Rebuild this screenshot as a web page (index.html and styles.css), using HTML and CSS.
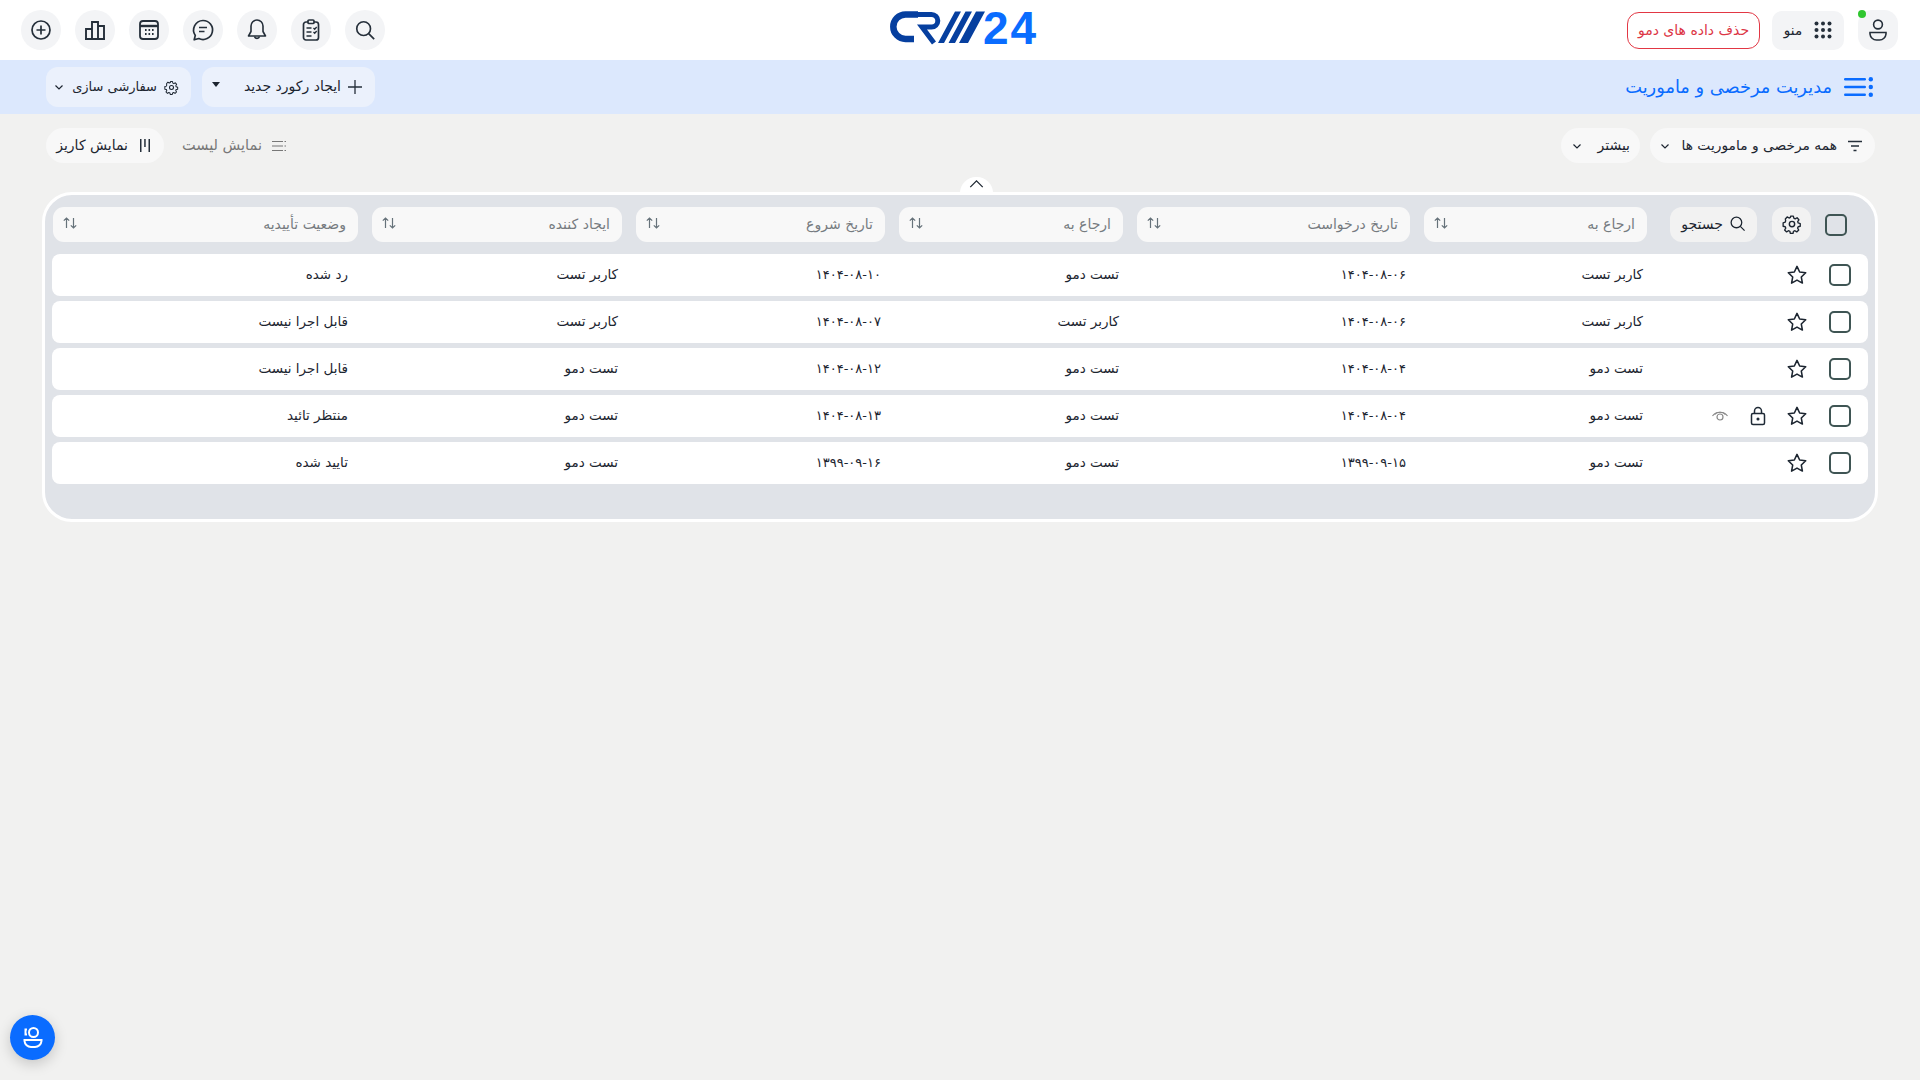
FILE: index.html
```html
<!DOCTYPE html>
<html lang="fa" dir="rtl">
<head>
<meta charset="utf-8">
<title>مدیریت مرخصی و ماموریت</title>
<link rel="stylesheet" href="styles.css">
</head>
<body>
<svg class="sprite" width="0" height="0" aria-hidden="true">
  <symbol id="i-star" viewBox="0 0 24 24"><path d="M12 2.6l2.9 6.1 6.6.9-4.8 4.6 1.2 6.6L12 17.6l-5.900 3.200 1.200-6.600L2.500 9.600l6.600-.9z" fill="none" stroke="currentColor" stroke-width="1.700" stroke-linejoin="round"/></symbol>
  <symbol id="i-sort" viewBox="0 0 16 16"><path d="M4.500 13V3M1.800 5.700L4.500 3l2.700 2.700M11.500 3v10M8.800 10.300l2.700 2.700 2.700-2.700" fill="none" stroke="currentColor" stroke-width="1.200"/></symbol>
  <symbol id="i-chev" viewBox="0 0 12 12"><path d="M2.500 4.500L6 8l3.500-3.500" fill="none" stroke="currentColor" stroke-width="1.200"/></symbol>
  <symbol id="i-gear" viewBox="0 0 24 24"><g fill="none" stroke="currentColor" stroke-width="1.700" stroke-linejoin="round"><circle cx="12" cy="12" r="3.200"/><path d="M10.300 2.500h3.400l.6 2.700 1.700.8 2.400-1.400 2.300 2.600-1.500 2.300.6 1.700 2.600.8v3.400l-2.600.6-.7 1.700 1.400 2.400-2.500 2.400-2.300-1.500-1.800.7-.6 2.600h-3.400l-.6-2.600-1.800-.7-2.300 1.500-2.500-2.400 1.400-2.400-.7-1.700-2.600-.6V11l2.600-.8.6-1.700L3.600 6.200l2.300-2.600 2.400 1.400 1.700-.8z" transform="translate(.6 .1) scale(.95)"/></g></symbol>
  <symbol id="i-search" viewBox="0 0 24 24"><circle cx="10.500" cy="10.500" r="7.500" fill="none" stroke="currentColor" stroke-width="1.800"/><path d="M16 16l6 6" stroke="currentColor" stroke-width="1.800"/></symbol>
</svg>

<header class="topbar">
  <div class="top-right">
    <button class="user-btn"><span class="online"></span>
      <svg width="24" height="24" viewBox="0 0 24 24" fill="none" stroke="#252f3a" stroke-width="1.600"><circle cx="12" cy="6.500" r="4.400"/><path d="M4 14.500h16v1.500a6.500 6.500 0 0 1-6.500 6h-3A6.500 6.500 0 0 1 4 16z"/></svg>
    </button>
    <button class="menu-btn">
      <svg width="18" height="18" viewBox="0 0 18 18" fill="#252f3a"><circle cx="2.500" cy="2.500" r="2"/><circle cx="9" cy="2.500" r="2"/><circle cx="15.500" cy="2.500" r="2"/><circle cx="2.500" cy="9" r="2"/><circle cx="9" cy="9" r="2"/><circle cx="15.500" cy="9" r="2"/><circle cx="2.500" cy="15.500" r="2"/><circle cx="9" cy="15.500" r="2"/><circle cx="15.500" cy="15.500" r="2"/></svg>
      <span>منو</span>
    </button>
    <button class="demo-btn">حذف داده های دمو</button>
  </div>
  <div class="logo" dir="ltr">
    <svg class="logo-mark" width="96" height="36" viewBox="0 0 96 36" fill="none">
      <path d="M29 4.500H16.500a12.200 12.200 0 0 0 0 24.400H25" stroke="#063f9f" stroke-width="6.500"/>
      <path d="M29 4.500H42.500a6.300 6.300 0 0 1 0 12.600H33L45 33" stroke="#063f9f" stroke-width="5"/>
      <path d="M49 33L66 1.500h6L55 33zM59.500 33L76.500 1.500H83L66 33zM70 33L87 1.500H96L79 33z" fill="#063f9f"/>
    </svg>
    <span class="logo-num">24</span>
  </div>
  <div class="top-left">
    <button class="circle"><svg width="22" height="22"><use href="#i-search" color="#252f3a"/></svg></button>
    <button class="circle"><svg width="24" height="24" viewBox="0 0 24 24" fill="none" stroke="#252f3a" stroke-width="1.700"><rect x="4.500" y="4" width="15" height="18" rx="2.500"/><rect x="9" y="2" width="6" height="3.500" rx="1" fill="#f3f4f6"/><path d="M7.500 10h5M7.500 14h5M7.500 18h5M14.500 10l1.200 1.200 2-2.200M14.500 14l1.200 1.200 2-2.200" stroke-width="1.400"/></svg></button>
    <button class="circle"><svg width="24" height="24" viewBox="0 0 24 24" fill="none" stroke="#252f3a" stroke-width="1.600"><path d="M12 2a6 6 0 0 0-6 6v5.500L3.500 18h17L18 13.500V8a6 6 0 0 0-6-6z" stroke-linejoin="round"/><path d="M9.500 18.500a2.600 2.600 0 0 0 5 0"/></svg></button>
    <button class="circle"><svg width="24" height="24" viewBox="0 0 24 24" fill="none" stroke="#252f3a" stroke-width="1.700"><path d="M12 2.500a9.500 9.500 0 1 1-4.200 18l-4.600 1.300 1.100-4.400A9.500 9.500 0 0 1 12 2.500z" stroke-linejoin="round"/><path d="M8 9.500h8M8 13.500h5.500"/></svg></button>
    <button class="circle"><svg width="24" height="24" viewBox="0 0 24 24" fill="none" stroke="#252f3a" stroke-width="1.800"><rect x="3" y="3" width="18" height="18" rx="3"/><path d="M3 8h18" stroke-width="2.400"/><path d="M8 12h1.600M11.500 12h1.600M15 12h1.600M8 16h1.600M11.500 16h1.600M15 16h1.600" stroke-width="2"/></svg></button>
    <button class="circle"><svg width="24" height="24" viewBox="0 0 24 24" fill="none" stroke="#252f3a" stroke-width="1.900"><path d="M3 21V11h6v10M9 21V4h6v17M15 21V8h6v13M2 21h20"/></svg></button>
    <button class="circle"><svg width="24" height="24" viewBox="0 0 24 24" fill="none" stroke="#252f3a" stroke-width="1.700"><circle cx="12" cy="12" r="9"/><path d="M12 7.500v9M7.500 12h9"/></svg></button>
  </div>
</header>

<section class="pagebar">
  <div class="page-title">
    <svg width="29" height="20" viewBox="0 0 29 20" fill="#0a6cff"><rect x="0" y="1" width="22" height="2.500" rx="1.200"/><rect x="0" y="8.800" width="22" height="2.500" rx="1.200"/><rect x="0" y="16.500" width="22" height="2.500" rx="1.200"/><circle cx="26.800" cy="2.200" r="2.200"/><circle cx="26.800" cy="10" r="2.200"/><circle cx="26.800" cy="17.800" r="2.200"/></svg>
    <h1>مدیریت مرخصی و ماموریت</h1>
  </div>
  <div class="page-actions">
    <button class="soft new-btn">
      <svg width="14" height="14" viewBox="0 0 14 14" stroke="#252f3a" stroke-width="1.300"><path d="M7 0v14M0 7h14"/></svg>
      <span>ایجاد رکورد جدید</span>
      <i class="caret"></i>
    </button>
    <button class="soft custom-btn">
      <svg width="15" height="15"><use href="#i-gear"/></svg>
      <span>سفارشی سازی</span>
      <svg class="to-end" width="12" height="12"><use href="#i-chev"/></svg>
    </button>
  </div>
</section>

<section class="filters">
  <div class="filter-group">
    <button class="pill filter-all">
      <svg width="14" height="12" viewBox="0 0 14 12" stroke="#252f3a" stroke-width="1.500"><path d="M0 1.500h14M3 6h8M5.500 10.500h3"/></svg>
      <span>همه مرخصی و ماموریت ها</span>
      <svg class="to-end" width="12" height="12"><use href="#i-chev"/></svg>
    </button>
    <button class="pill more">
      <span>بیشتر</span>
      <svg class="to-end" width="12" height="12"><use href="#i-chev"/></svg>
    </button>
  </div>
  <div class="view-group">
    <button class="view-list">
      <svg width="14" height="12" viewBox="0 0 14 12" stroke="#777" stroke-width="1.200"><path d="M0 1.500h11M0 6h11M0 10.500h11M12.500 1.500h1.500M12.500 6h1.500M12.500 10.500h1.500"/></svg>
      <span>نمایش لیست</span>
    </button>
    <button class="pill view-kanban">
      <svg width="10" height="13" viewBox="0 0 10 13" fill="#252f3a"><rect x="0" y="0" width="1.500" height="13"/><rect x="4.200" y="0" width="1.500" height="8"/><rect x="8.500" y="0" width="1.500" height="13"/></svg>
      <span>نمایش کاریز</span>
    </button>
  </div>
</section>

<main class="card">
  <button class="collapse"><svg width="15" height="8" viewBox="0 0 16 9" fill="none" stroke="#1c2530" stroke-width="1.400"><path d="M1 8l7-7 7 7"/></svg></button>
  <div class="grid head">
    <span class="box head-box"></span>
    <button class="head-btn"><svg width="20" height="20"><use href="#i-gear"/></svg></button>
    <button class="head-btn search-btn"><svg width="17" height="17"><use href="#i-search"/></svg><span>جستجو</span></button>
    <div class="th"><span>ارجاع به</span><svg width="16" height="16"><use href="#i-sort"/></svg></div>
    <div class="th"><span>تاریخ درخواست</span><svg width="16" height="16"><use href="#i-sort"/></svg></div>
    <div class="th"><span>ارجاع به</span><svg width="16" height="16"><use href="#i-sort"/></svg></div>
    <div class="th"><span>تاریخ شروع</span><svg width="16" height="16"><use href="#i-sort"/></svg></div>
    <div class="th"><span>ایجاد کننده</span><svg width="16" height="16"><use href="#i-sort"/></svg></div>
    <div class="th"><span>وضعیت تأییدیه</span><svg width="16" height="16"><use href="#i-sort"/></svg></div>
  </div>
  <div class="rows">
    <div class="grid row">
      <span class="box"></span>
      <div class="actions"><svg width="22" height="22"><use href="#i-star"/></svg></div>
      <div class="td">کاربر تست</div><div class="td date">۱۴۰۴-۰۸-۰۶</div><div class="td">تست دمو</div><div class="td date">۱۴۰۴-۰۸-۱۰</div><div class="td">کاربر تست</div><div class="td last">رد شده</div>
    </div>
    <div class="grid row">
      <span class="box"></span>
      <div class="actions"><svg width="22" height="22"><use href="#i-star"/></svg></div>
      <div class="td">کاربر تست</div><div class="td date">۱۴۰۴-۰۸-۰۶</div><div class="td">کاربر تست</div><div class="td date">۱۴۰۴-۰۸-۰۷</div><div class="td">کاربر تست</div><div class="td last">قابل اجرا نیست</div>
    </div>
    <div class="grid row">
      <span class="box"></span>
      <div class="actions"><svg width="22" height="22"><use href="#i-star"/></svg></div>
      <div class="td">تست دمو</div><div class="td date">۱۴۰۴-۰۸-۰۴</div><div class="td">تست دمو</div><div class="td date">۱۴۰۴-۰۸-۱۲</div><div class="td">تست دمو</div><div class="td last">قابل اجرا نیست</div>
    </div>
    <div class="grid row">
      <span class="box"></span>
      <div class="actions">
        <svg width="22" height="22"><use href="#i-star"/></svg>
        <svg width="20" height="20" viewBox="0 0 20 20" fill="none" stroke="#1f2a36" stroke-width="1.500"><rect x="3.500" y="7.500" width="13" height="11" rx="1.500"/><path d="M6.500 7.500V5a3.500 3.500 0 0 1 7 0v2.500"/><circle cx="10" cy="13" r=".8" fill="#1f2a36"/></svg>
        <svg width="20" height="20" viewBox="0 0 20 20" fill="none" stroke="#8a8a8a" stroke-width="1.200"><path d="M2.500 10C6 5 14 5 17.500 10"/><path d="M4.500 8.500C7 5.500 13 5.500 15.500 8.500"/><circle cx="10" cy="11" r="3"/></svg>
      </div>
      <div class="td">تست دمو</div><div class="td date">۱۴۰۴-۰۸-۰۴</div><div class="td">تست دمو</div><div class="td date">۱۴۰۴-۰۸-۱۳</div><div class="td">تست دمو</div><div class="td last">منتظر تائید</div>
    </div>
    <div class="grid row">
      <span class="box"></span>
      <div class="actions"><svg width="22" height="22"><use href="#i-star"/></svg></div>
      <div class="td">تست دمو</div><div class="td date">۱۳۹۹-۰۹-۱۵</div><div class="td">تست دمو</div><div class="td date">۱۳۹۹-۰۹-۱۶</div><div class="td">تست دمو</div><div class="td last">تایید شده</div>
    </div>
  </div>
</main>

<button class="fab"><svg width="26" height="26" viewBox="0 0 26 26" fill="none" stroke="#fff" stroke-width="2"><circle cx="13.500" cy="7.500" r="4.500"/><path d="M7 4.500H5.500v5H7"/><path d="M4.500 15h17v1a6.500 6.500 0 0 1-6.500 6h-4a6.500 6.500 0 0 1-6.500-6z"/></svg></button>
</body>
</html>
```
FILE: styles.css
```css
* { box-sizing: border-box; }
html, body { height: 100%; }
body {
  margin: 0;
  background: #f1f1f0;
  color: #1c2530;
  font-family: "DejaVu Sans", sans-serif;
  font-size: 13.500px;
  overflow: hidden;
}
button { font: inherit; color: inherit; border: 0; background: none; padding: 0; white-space: nowrap; }
svg { display: block; flex: none; }
.sprite { position: absolute; }

.topbar {
  height: 60px;
  background: #fff;
  display: grid;
  grid-template-columns: 1fr auto 1fr;
  align-items: center;
  padding: 0 22px 0 21px;
}
.top-right { display: flex; align-items: center; gap: 14px; }
.top-left { display: flex; align-items: center; gap: 14px; justify-content: flex-end; }
.logo { display: flex; align-items: center; margin-right: -7px; margin-top: -4px; width: 148px; }
.logo-num { font-family: "Liberation Sans", sans-serif; font-weight: 700; font-size: 46px; line-height: 46px; letter-spacing: 2px; color: #0a6cff; margin-left: -2px; }
.user-btn { position: relative; width: 40px; height: 40px; border-radius: 14px; background: #f3f4f6; display: flex; align-items: center; justify-content: center; }
.online { position: absolute; top: 0; right: 32px; width: 8px; height: 8px; border-radius: 50%; background: #2fc62f; }
.menu-btn { width: 72px; height: 39px; border-radius: 10px; background: #f3f4f6; display: flex; align-items: center; justify-content: center; gap: 12px; font-size: 13.500px; }
.demo-btn { width: 133px; height: 37px; margin-right: -2px; border: 1px solid #e23744; border-radius: 12px; color: #dc3545; font-size: 14px; background: #fff; }
.circle { width: 40px; height: 40px; border-radius: 50%; background: #f3f4f6; display: flex; align-items: center; justify-content: center; }

.pagebar {
  height: 54px;
  background: #dce8fd;
  display: flex;
  align-items: center;
  justify-content: space-between;
  padding: 0 47px 0 46px;
}
.page-title { display: flex; align-items: center; gap: 12px; color: #0a6cff; }
.page-title h1 { margin: -2px 0 0; font-size: 17.800px; font-weight: 500; }
.page-actions { display: flex; gap: 11px; }
.soft { height: 40px; border-radius: 12px; background: #ebf1fc; display: flex; align-items: center; font-size: 14px; }
.soft span, .pill span, .view-list span, .th span, .search-btn span { margin-top: -2px; }
.new-btn { width: 173px; padding: 0 13px 0 0; gap: 7px; }
.caret { width: 0; height: 0; border: 4px solid transparent; border-top: 5px solid #1c2530; border-bottom: 0; margin-right: auto; margin-left: 10px; margin-top: -6px; }
.custom-btn { width: 145px; padding: 0 12px 0 8px; gap: 7px; font-size: 13px; }
.to-end { margin-right: auto; }

.filters { display: flex; justify-content: space-between; align-items: center; padding: 0 45px 0 46px; margin-top: 14px; }
.filter-group, .view-group { display: flex; align-items: center; }
.filter-group { gap: 10px; }
.view-group { gap: 18px; }
.pill { height: 35px; border-radius: 18px; background: #f8f8f8; display: flex; align-items: center; font-size: 14px; }
.filter-all { width: 225px; padding: 0 13px 0 9px; gap: 11px; font-size: 13.800px; }
.more { width: 79px; padding: 0 10px; }
.view-list { display: flex; align-items: center; gap: 10px; color: #777; font-size: 14.500px; }
.view-kanban { width: 118px; padding: 0 14px 0 8px; gap: 12px; }

.card {
  position: relative;
  margin: 29px 42px 0;
  border: 3px solid #fff;
  border-radius: 30px;
  background: #e0e3e8;
  padding: 12px 7px 35px;
}
.collapse { position: absolute; top: -18px; left: 50%; width: 33px; height: 18px; padding-bottom: 5px; border-radius: 16px 16px 0 0; background: #fff; display: flex; align-items: center; justify-content: center; }
.grid {
  display: grid;
  grid-template-columns: 22px 39px 97px 223px 273px 224px 249px 250px 305px;
  column-gap: 14px;
  align-items: center;
  padding: 0 21px 0 1px;
}
.head { height: 35px; }
.box { display: block; width: 22px; height: 22px; border: 2.500px solid #3f5554; border-radius: 5px; }
.head-btn { height: 35px; border-radius: 12px; background: #f2f2f2; display: flex; align-items: center; justify-content: center; font-size: 14px; }
.head-btn svg { margin-top: -2px; }
.search-btn { width: 87px; margin-right: 1px; gap: 6px; }
.th { height: 35px; border-radius: 11px; background: #f8f8f8; display: flex; align-items: center; justify-content: space-between; padding: 0 12px 0 9px; color: #767b80; font-size: 14px; }
.th > svg { margin-top: -3px; color: #66727a; }
.rows { margin-top: 12px; display: flex; flex-direction: column; gap: 5px; }
.row { height: 42px; border-radius: 8px; background: #fff; }
.row .box { margin-right: -4px; }
.actions { grid-column: 2 / span 2; display: flex; align-items: center; gap: 18px; padding-right: 3px; }
.td { padding-right: 4px; padding-bottom: 2px; color: #1c2530; }
.td.date { font-size: 13px; }
.td.last { padding-right: 10px; }
.fab { position: fixed; left: 10px; bottom: 20px; width: 45px; height: 45px; border-radius: 50%; background: #0a6cff; box-shadow: 0 4px 14px rgba(0,0,0,.18); display: flex; align-items: center; justify-content: center; }
```
